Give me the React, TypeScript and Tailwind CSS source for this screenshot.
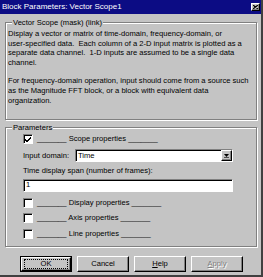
import React from 'react';

const raised =
  'bg-[#c4c4c4] border border-t-white border-l-white border-r-black border-b-black shadow-[inset_-1px_-1px_0_#808080]';
const sunken =
  'bg-white border border-t-[#808080] border-l-[#808080] border-r-white border-b-white shadow-[inset_1px_1px_0_#000]';
const etched = 'border border-[#808080] shadow-[inset_1px_1px_0_#fff,1px_1px_0_#fff]';

function CheckBox({ checked }: { checked?: boolean }) {
  return (
    <span className={`${sunken} w-[10px] h-[10px] flex items-center justify-center shrink-0`}>
      {checked && (
        <svg width="7" height="7" viewBox="0 0 7 7">
          <path d="M0 3 L2 5 L6 1 M0 4 L2 6 L6 2" stroke="#000" strokeWidth="1" fill="none" />
        </svg>
      )}
    </span>
  );
}

function Section({ label }: { label: string }) {
  return (
    <div className="flex items-center gap-[3px] h-[10px]">
      <CheckBox />
      <span className="pl-[1px]">_______ {label} _______</span>
    </div>
  );
}

export default function App() {
  return (
    <div className="w-[263px] h-[277px] bg-[#c4c4c4] border-r-2 border-b-2 border-r-[#404040] border-b-[#404040] font-['Liberation_Sans',Arial,sans-serif] text-[7.6px] leading-[9.6px] text-black overflow-hidden">
      {/* Title bar */}
      <div className="h-[14px] bg-[#0c0c84] flex items-center justify-between pl-[2px] pr-[1px]">
        <span className="text-white text-[8px] leading-[14px]">Block Parameters: Vector Scope1</span>
        <span className={`${raised} w-[9px] h-[8px] flex items-center justify-center`}>
          <svg width="5" height="4" viewBox="0 0 5 4">
            <path d="M0 0 L5 4 M5 0 L0 4" stroke="#000" strokeWidth="1.2" />
          </svg>
        </span>
      </div>

      <div className="pl-[5px] pt-[8px]">
        {/* Description group */}
        <div className={`relative ${etched} w-[252px] h-[98px] pl-[2px] pt-[6px]`}>
          <span className="absolute -top-[5px] left-[6px] bg-[#c4c4c4] px-[1px]">Vector Scope (mask) (link)</span>
          <p>
            Display a vector or matrix of time-domain, frequency-domain, or<br />
            user-specified data.&nbsp; Each column of a 2-D input matrix is plotted as a<br />
            separate data channel.&nbsp; 1-D inputs are assumed to be a single data<br />
            channel.
          </p>
          <p className="mt-[9px]">
            For frequency-domain operation, input should come from a source such<br />
            as the Magnitude FFT block, or a block with equivalent data<br />
            organization.
          </p>
        </div>

        {/* Parameters group */}
        <div className={`relative ${etched} w-[252px] h-[120px] mt-[7px] pl-[17px] pt-[6px]`}>
          <span className="absolute -top-[5px] left-[6px] bg-[#c4c4c4] px-[1px]">Parameters</span>
          <div className="flex items-center gap-[3px] h-[10px]">
            <CheckBox checked />
            <span className="pl-[1px]">_______ Scope properties _______</span>
          </div>
          <div className="flex items-center mt-[5px] h-[13px]">
            <span className="w-[52px]">Input domain:</span>
            <div className={`${sunken} w-[158px] h-[13px] flex items-center justify-between pl-[2px]`}>
              <span>Time</span>
              <span className={`${raised} w-[11px] h-[11px] flex items-center justify-center`}>
                <svg width="5" height="4" viewBox="0 0 5 4">
                  <path d="M0 0 H5 L2.5 3 Z" fill="#000" />
                  <rect x="0" y="3.4" width="5" height="0.6" fill="#000" />
                </svg>
              </span>
            </div>
          </div>
          <div className="mt-[4px]">Time display span (number of frames):</div>
          <div className={`${sunken} w-[210px] h-[13px] mt-[3px] pl-[2px] flex items-center`}>1</div>
          <div className="flex flex-col gap-[5.5px] mt-[6px]">
            <Section label="Display properties" />
            <Section label="Axis properties" />
            <Section label="Line properties" />
          </div>
        </div>

        {/* Buttons */}
        <div className="flex gap-[5px] pl-[15px] mt-[9px]">
          <button className="w-[52px] h-[16px] border border-black">
            <span className={`${raised} w-full h-full flex items-center justify-center`}>
              <span className="border border-dotted border-black w-[44px] h-[10px] flex items-center justify-center">OK</span>
            </span>
          </button>
          <button className={`${raised} w-[52px] h-[16px] flex items-center justify-center`}>Cancel</button>
          <button className={`${raised} w-[52px] h-[16px] flex items-center justify-center`}>
            <span><span className="underline">H</span>elp</span>
          </button>
          <button className={`${raised} w-[52px] h-[16px] flex items-center justify-center text-[#808080] [text-shadow:1px_1px_0_#fff]`}>
            <span><span className="underline">A</span>pply</span>
          </button>
        </div>
      </div>
    </div>
  );
}
